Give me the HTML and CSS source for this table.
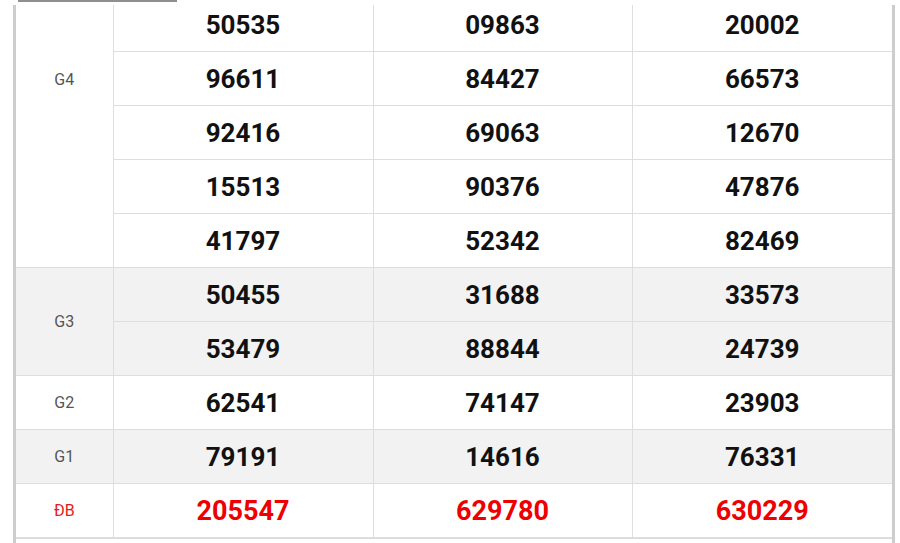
FILE: index.html
```html
<!DOCTYPE html>
<html lang="vi">
<head>
<meta charset="utf-8">
<title>Kết quả xổ số</title>
<link rel="stylesheet" href="styles.css">
</head>
<body>
<div class="viewport">
  <div class="top-strip"><span class="tab-edge"></span></div>
  <div class="board">
    <table class="results">
      <colgroup>
        <col class="c-label">
        <col class="c-num1">
        <col class="c-num2">
        <col class="c-num3">
      </colgroup>
      <tbody class="prize">
        <tr>
          <td class="label label-g4" rowspan="5">G4</td>
          <td class="num">50535</td><td class="num">09863</td><td class="num last">20002</td>
        </tr>
        <tr><td class="num">96611</td><td class="num">84427</td><td class="num last">66573</td></tr>
        <tr><td class="num">92416</td><td class="num">69063</td><td class="num last">12670</td></tr>
        <tr><td class="num">15513</td><td class="num">90376</td><td class="num last">47876</td></tr>
        <tr><td class="num">41797</td><td class="num">52342</td><td class="num last">82469</td></tr>
      </tbody>
      <tbody class="prize shaded">
        <tr>
          <td class="label" rowspan="2">G3</td>
          <td class="num">50455</td><td class="num">31688</td><td class="num last">33573</td>
        </tr>
        <tr><td class="num">53479</td><td class="num">88844</td><td class="num last">24739</td></tr>
      </tbody>
      <tbody class="prize">
        <tr><td class="label">G2</td><td class="num">62541</td><td class="num">74147</td><td class="num last">23903</td></tr>
      </tbody>
      <tbody class="prize shaded">
        <tr><td class="label">G1</td><td class="num">79191</td><td class="num">14616</td><td class="num last">76331</td></tr>
      </tbody>
      <tbody class="prize special">
        <tr><td class="label">ĐB</td><td class="num">205547</td><td class="num">629780</td><td class="num last">630229</td></tr>
      </tbody>
    </table>
    <div class="board-tail"></div>
  </div>
</div>
</body>
</html>
```

FILE: styles.css
```css
html, body {
  margin: 0;
  padding: 0;
  background: #ffffff;
}

body {
  font-family: Roboto, "Liberation Sans", Arial, sans-serif;
  overflow: hidden;
}

.viewport {
  position: relative;
  width: 900px;
  height: 543px;
  overflow: hidden;
}

.top-strip {
  position: absolute;
  top: 0;
  left: 0;
  right: 0;
  height: 5px;
  background: #ffffff;
  z-index: 2;
}

.tab-edge {
  position: absolute;
  top: 0;
  left: 18px;
  width: 159px;
  height: 2px;
  background: #8f8f8f;
}

.board {
  margin-left: 13px;
  margin-top: -3px;
  width: 876px;
  border-left: 3px solid #cdcdcd;
  border-right: 3px solid #cdcdcd;
}

.results {
  width: 876px;
  border-collapse: collapse;
  table-layout: fixed;
}

.c-label { width: 97px; }
.c-num1 { width: 260px; }
.c-num2 { width: 259px; }
.c-num3 { width: 260px; }

.results td {
  height: 53px;
  padding: 0;
  border: 1px solid #dedede;
  text-align: center;
  vertical-align: middle;
}

.results td.label {
  border-left: none;
  font-size: 16px;
  color: #555555;
}

.results td.last {
  border-right: none;
}

.results td.label-g4 {
  vertical-align: top;
  padding-top: 72px;
  height: auto;
}

.results td.num {
  font-size: 26px;
  font-weight: 700;
  color: #111111;
}

.shaded td {
  background: #f2f2f2;
}

.special td.label {
  color: #e51a1a;
}

.special td.num {
  color: #ee0000;
  font-size: 27px;
}

.board-tail {
  height: 40px;
  border-top: 1px solid #dcdcdc;
}
```
